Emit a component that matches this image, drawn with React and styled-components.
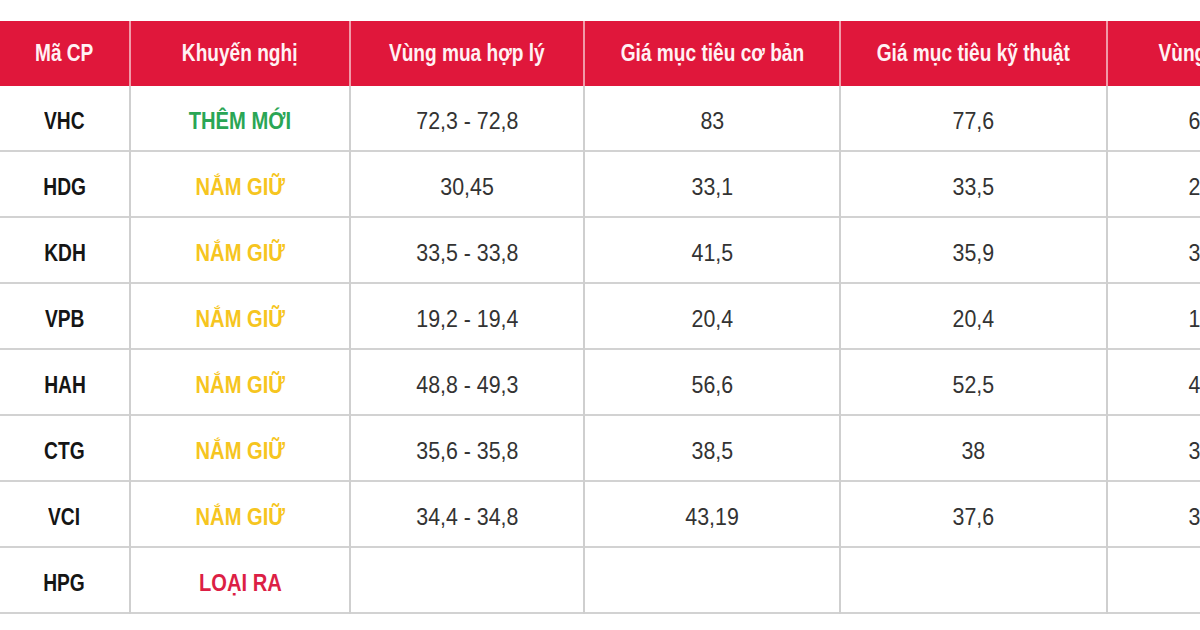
import React from "react";
import styled, { createGlobalStyle } from "styled-components";

const GlobalStyle = createGlobalStyle`
  html, body {
    margin: 0;
    padding: 0;
    background: #ffffff;
    overflow: hidden;
  }
  body {
    font-family: "Liberation Sans", Arial, sans-serif;
  }
`;

const Page = styled.div`
  width: 1200px;
  height: 630px;
  overflow: hidden;
  padding-top: 21px;
  box-sizing: border-box;
`;

const Table = styled.table`
  width: 1311px;
  table-layout: fixed;
  border-collapse: collapse;
`;

// condensed look: the source uses a narrow Helvetica
const Narrow = styled.span`
  display: inline-block;
  white-space: nowrap;
  transform: scaleX(${(p) => p.$squeeze || 0.82});
  transform-origin: center;
`;

const HeadCell = styled.th`
  height: 65px;
  padding: 0;
  background: #e0173b;
  color: #fff2f4;
  font-size: 23px;
  font-weight: 700;
  text-align: center;
  vertical-align: middle;
  border-left: 2px solid #f19aa8;
  &:first-child {
    border-left: none;
  }
`;

const Row = styled.tr`
  border-bottom: 2px solid #d2d2d2;
`;

const Cell = styled.td`
  height: 58px;
  padding: 6px 0 0;
  text-align: center;
  vertical-align: middle;
  font-size: 24px;
  color: #333333;
  border-left: 2px solid #cfcfcf;
  &:first-child {
    border-left: none;
  }
`;

const Code = styled(Cell)`
  font-weight: 700;
  font-size: 24px;
  color: #151515;
`;

const statusColors = {
  add: "#2aa655",
  hold: "#f6c520",
  out: "#dc1f45",
};

const Status = styled(Cell)`
  font-size: 24px;
  font-weight: 700;
  color: ${(p) => statusColors[p.$kind]};
`;

const columns = [
  { title: "Mã CP", width: 130 },
  { title: "Khuyến nghị", width: 220 },
  { title: "Vùng mua hợp lý", width: 234 },
  { title: "Giá mục tiêu cơ bản", width: 256 },
  { title: "Giá mục tiêu kỹ thuật", width: 267 },
  { title: "Vùng cắt lỗ", width: 204 },
];

const rows = [
  ["VHC", "THÊM MỚI", "add", "72,3 - 72,8", "83", "77,6", "68,5"],
  ["HDG", "NẮM GIỮ", "hold", "30,45", "33,1", "33,5", "28,5"],
  ["KDH", "NẮM GIỮ", "hold", "33,5 - 33,8", "41,5", "35,9", "31,5"],
  ["VPB", "NẮM GIỮ", "hold", "19,2 - 19,4", "20,4", "20,4", "18,2"],
  ["HAH", "NẮM GIỮ", "hold", "48,8 - 49,3", "56,6", "52,5", "45,5"],
  ["CTG", "NẮM GIỮ", "hold", "35,6 - 35,8", "38,5", "38", "33,8"],
  ["VCI", "NẮM GIỮ", "hold", "34,4 - 34,8", "43,19", "37,6", "32,5"],
  ["HPG", "LOẠI RA", "out", "", "", "", ""],
];

export default function App() {
  return (
    <>
      <GlobalStyle />
      <Page>
        <Table>
          <colgroup>
            {columns.map((c) => (
              <col key={c.title} style={{ width: c.width }} />
            ))}
          </colgroup>
          <thead>
            <tr>
              {columns.map((c) => (
                <HeadCell key={c.title}>
                  <Narrow $squeeze={0.83}>{c.title}</Narrow>
                </HeadCell>
              ))}
            </tr>
          </thead>
          <tbody>
            {rows.map(([code, status, kind, buy, base, tech, stop]) => (
              <Row key={code}>
                <Code>
                  <Narrow $squeeze={0.8}>{code}</Narrow>
                </Code>
                <Status $kind={kind}>
                  <Narrow $squeeze={0.84}>{status}</Narrow>
                </Status>
                {[buy, base, tech, stop].map((v, i) => (
                  <Cell key={i}>
                    <Narrow $squeeze={0.89}>{v}</Narrow>
                  </Cell>
                ))}
              </Row>
            ))}
          </tbody>
        </Table>
      </Page>
    </>
  );
}
